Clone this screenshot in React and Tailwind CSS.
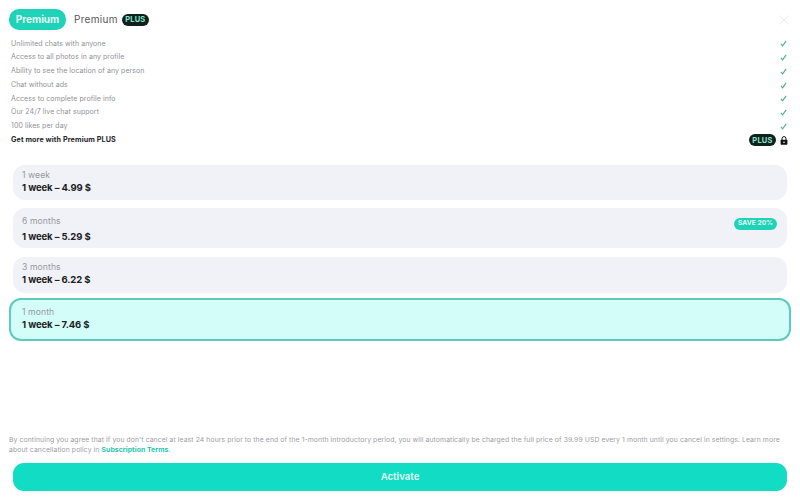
import React from 'react';

const features = [
  'Unlimited chats with anyone',
  'Access to all photos in any profile',
  'Ability to see the location of any person',
  'Chat without ads',
  'Access to complete profile info',
  'Our 24/7 live chat support',
  '100 likes per day',
];

const PlusBadge = () => (
  <span className="flex h-[12px] w-[27px] items-center justify-center rounded-full bg-[#12201c] text-[7.5px] font-bold tracking-[0.2px] text-[#7fe5cd]">
    PLUS
  </span>
);

const Check = () => (
  <svg width="7" height="7" viewBox="0 0 8 8" fill="none">
    <path d="M1 4.5 L3 6.7 L7 1" stroke="#4fae97" strokeWidth="1.3" />
  </svg>
);

const Lock = () => (
  <svg width="8" height="9" viewBox="0 0 8 9">
    <path d="M2 4V2.6a2 2 0 0 1 4 0V4" fill="none" stroke="#111" strokeWidth="1" />
    <rect x="0.6" y="3.8" width="6.8" height="5" rx="0.8" fill="#111" />
    <circle cx="4" cy="6.3" r="0.8" fill="#fff" />
  </svg>
);

const PlanCard = ({ label, price, className, badge }) => (
  <div className={`flex flex-col rounded-[12px] ${className}`}>
    <div className="flex items-center justify-between">
      <span className="text-[8.6px] leading-[11px] tracking-[0.1px] text-[#96989e]">{label}</span>
      {badge && (
        <span className="mt-[3px] -mb-[3px] flex h-[12px] w-[43px] items-center justify-center rounded-full bg-[#1fd3b9] text-[6.6px] font-bold tracking-[0.1px] text-[#e8fbf6]">
          {badge}
        </span>
      )}
    </div>
    <span className="text-[9.5px] font-bold leading-[14px] tracking-[-0.1px] text-[#1c1d22]">{price}</span>
  </div>
);

export default function App() {
  return (
    <div className="flex h-[500px] w-[800px] flex-col overflow-hidden bg-white font-['Inter','Liberation_Sans',sans-serif]">
      {/* Tabs */}
      <div className="flex items-center pl-[9px] pr-[11px] pt-[9px]">
        <div className="flex h-[21px] w-[57px] items-center justify-center rounded-[10px] bg-[#1fd3b9] text-[10px] font-bold text-[#e8fbf6]">
          Premium
        </div>
        <span className="ml-[8px] text-[10px] tracking-[0.3px] text-[#55575c]">Premium</span>
        <span className="ml-[4px]"><PlusBadge /></span>
        <svg className="ml-auto" width="10" height="10" viewBox="0 0 10 10">
          <path d="M0.5 0.5 L9.5 9.5 M9.5 0.5 L0.5 9.5" stroke="#e8e8ea" strokeWidth="0.8" />
        </svg>
      </div>

      {/* Features */}
      <div className="mt-[7px] flex flex-col pl-[11px] pr-[12px]">
        {features.map((f) => (
          <div key={f} className="flex h-[13.75px] items-center justify-between">
            <span className="text-[7px] tracking-[0.06px] text-[#909296]">{f}</span>
            <span className="pr-[1px]"><Check /></span>
          </div>
        ))}
        <div className="flex h-[13.75px] items-center justify-between">
          <span className="text-[7.2px] font-bold tracking-[0.1px] text-[#26272b]">Get more with Premium PLUS</span>
          <span className="flex items-center gap-[4px]">
            <PlusBadge />
            <Lock />
          </span>
        </div>
      </div>

      {/* Plans */}
      <div className="mt-[17.5px] flex flex-col">
        <div className="mx-[13px] flex flex-col">
          <PlanCard label="1 week" price="1 week – 4.99 $" className="h-[35.5px] justify-center bg-[#f1f2f7] px-[9px]" />
          <PlanCard label="6 months" price="1 week – 5.29 $" badge="SAVE 20%" className="mt-[8px] h-[40px] justify-center gap-[3px] bg-[#f1f2f7] pl-[9px] pr-[10px] pt-[3px]" />
          <PlanCard label="3 months" price="1 week – 6.22 $" className="mt-[8.5px] h-[36px] justify-center bg-[#f1f2f7] px-[9px]" />
        </div>
        <PlanCard label="1 month" price="1 week – 7.46 $" className="mx-[9px] mt-[5px] h-[43px] justify-center border-2 border-[#5ccbbb] bg-[#d3fdf9] px-[11px]" />
      </div>

      {/* Footer */}
      <div className="mt-auto flex flex-col px-[9px] pb-[9px]">
        <p className="text-[6.85px] leading-[10px] tracking-[0.085px] text-[#9da0a3]">
          By continuing you agree that if you don't cancel at least 24 hours prior to the end of the 1-month introductory period, you will automatically be charged the full price of 39.99 USD every 1 month until you cancel in settings. Learn more about cancellation policy in{' '}
          <span className="font-bold text-[#1fc4ac]">Subscription Terms</span>.
        </p>
        <button className="mx-[4px] mt-[8px] flex h-[28px] items-center justify-center rounded-[11px] bg-[#12dcc3] text-[9.5px] font-bold text-[#d6f7ef]">
          Activate
        </button>
      </div>
    </div>
  );
}
